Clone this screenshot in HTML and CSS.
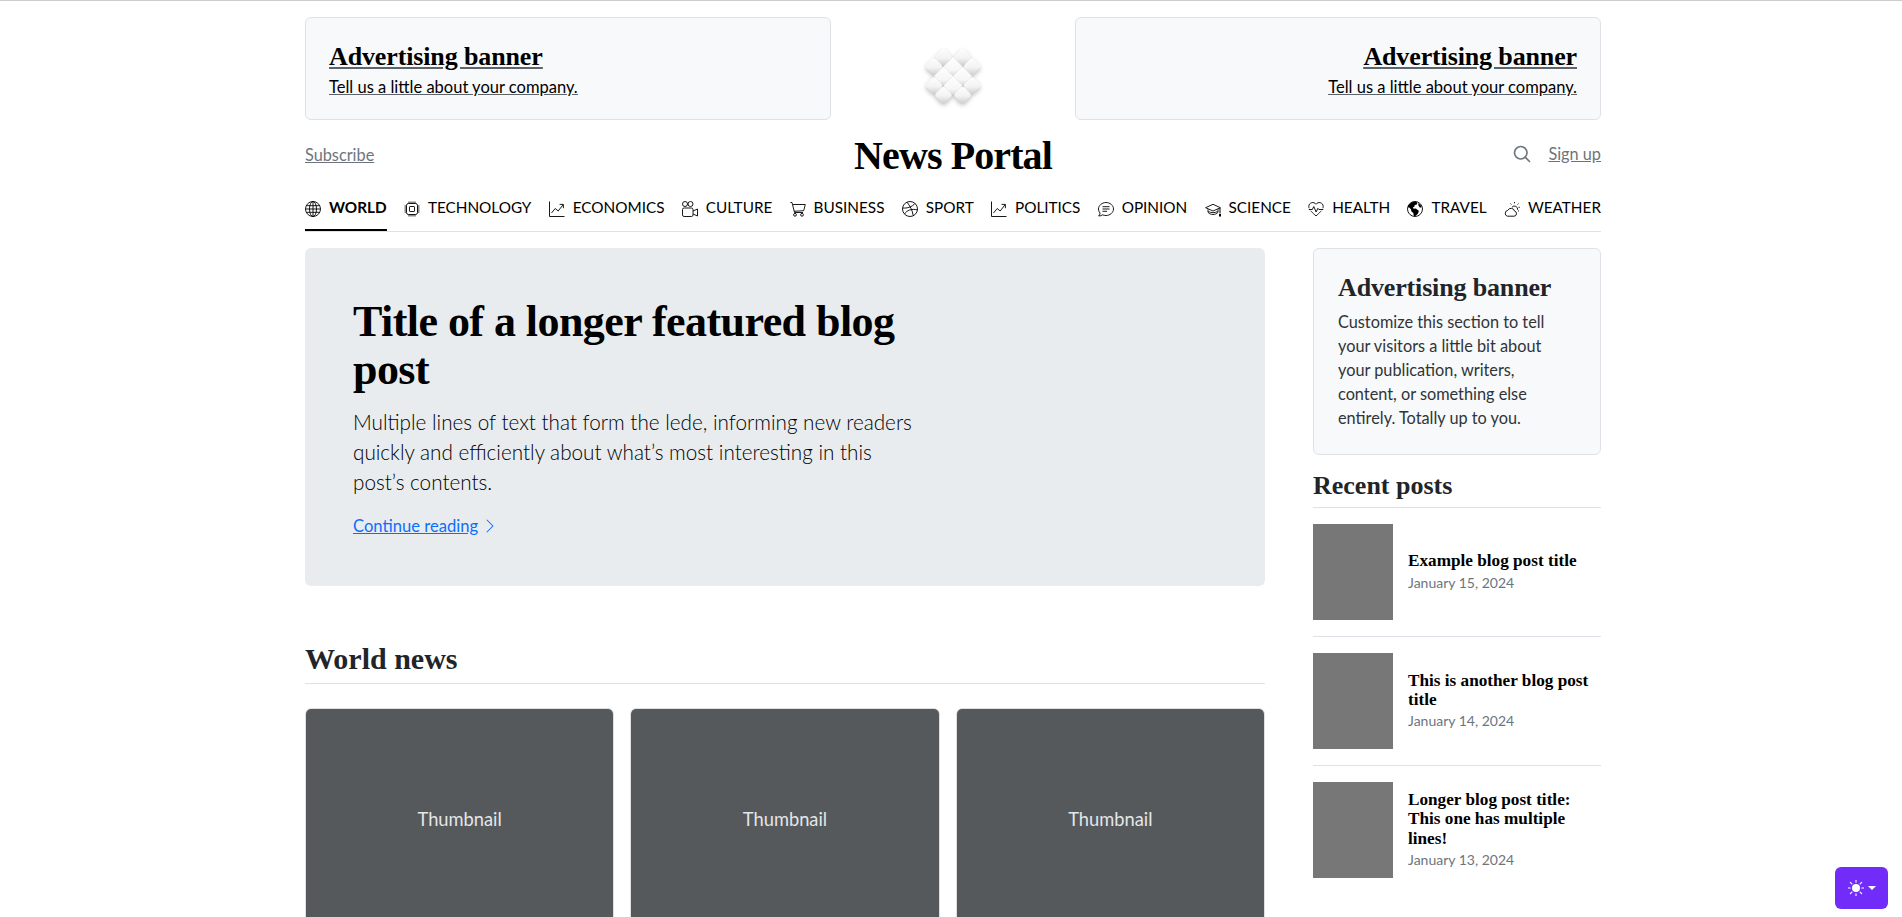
FILE: index.html
```html
<!DOCTYPE html>
<html lang="en">
<head>
<meta charset="utf-8">
<title>News Portal</title>
<link rel="stylesheet" href="styles.css">
</head>
<body>
<div class="page">
  <div class="banners">
    <a class="promo" href="#"><strong class="promo-title">Advertising banner</strong><span class="promo-sub">Tell us a little about your company.</span></a>
    <div class="logo-cell">
      <svg class="logo" viewBox="0 0 64 64" width="76" height="76" aria-hidden="true">
        <defs>
          <linearGradient id="cell" x1="0" y1="0" x2="1" y2="1"><stop offset="0" stop-color="#fff"/><stop offset="0.55" stop-color="#f3f3f3"/><stop offset="1" stop-color="#cacaca"/></linearGradient>
          <linearGradient id="inner" x1="0" y1="0" x2="1" y2="1"><stop offset="0" stop-color="#fff"/><stop offset="0.7" stop-color="#f6f6f6"/><stop offset="1" stop-color="#d8d8d8"/></linearGradient>
        </defs>
        <g transform="rotate(45 32 32)">
          <rect x="20.7" y="9.4" width="11.3" height="11.3" rx="3" fill="url(#cell)"/>
          <rect x="32" y="9.4" width="11.3" height="11.3" rx="3" fill="url(#cell)"/>
          <rect x="9.4" y="20.7" width="11.3" height="11.3" rx="3" fill="url(#cell)"/>
          <rect x="20.7" y="20.7" width="11.3" height="11.3" fill="url(#inner)"/>
          <rect x="32" y="20.7" width="11.3" height="11.3" fill="url(#inner)"/>
          <rect x="43.3" y="20.7" width="11.3" height="11.3" rx="3" fill="url(#cell)"/>
          <rect x="9.4" y="32" width="11.3" height="11.3" rx="3" fill="url(#cell)"/>
          <rect x="20.7" y="32" width="11.3" height="11.3" fill="url(#inner)"/>
          <rect x="32" y="32" width="11.3" height="11.3" fill="url(#inner)"/>
          <rect x="43.3" y="32" width="11.3" height="11.3" rx="3" fill="url(#cell)"/>
          <rect x="20.7" y="43.3" width="11.3" height="11.3" rx="3" fill="url(#cell)"/>
          <rect x="32" y="43.3" width="11.3" height="11.3" rx="3" fill="url(#cell)"/>
        </g>
      </svg>
    </div>
    <a class="promo promo-right" href="#"><strong class="promo-title">Advertising banner</strong><span class="promo-sub">Tell us a little about your company.</span></a>
  </div>

  <header class="masthead">
    <div class="mast-left"><a class="muted-link" href="#">Subscribe</a></div>
    <a class="brand" href="#">News Portal</a>
    <div class="mast-right">
      <svg class="search" viewBox="0 0 24 24" width="20" height="20" fill="none" stroke="currentColor" stroke-width="2" stroke-linecap="round" stroke-linejoin="round" aria-hidden="true"><circle cx="10.5" cy="10.5" r="7.5"/><path d="M21 21l-5.2-5.2"/></svg>
      <a class="muted-link signup" href="#">Sign up</a>
    </div>
  </header>

  <nav class="nav">
    <a class="nav-item active" href="#"><svg class="ico" viewBox="0 0 16 16"><circle cx="8" cy="8" r="7.5"/><ellipse cx="8" cy="8" rx="3.5" ry="7.5"/><path d="M8 .5v15M.5 8h15M1.6 4.7h12.8M1.6 11.3h12.8"/></svg>WORLD</a>
    <a class="nav-item" href="#"><svg class="ico" viewBox="0 0 16 16"><rect x="2.5" y="2.5" width="11" height="11" rx="2"/><rect x="5.5" y="5.5" width="5" height="5" rx=".6"/><path d="M5 .5v2M7 .5v2M9 .5v2M11 .5v2M5 13.5v2M7 13.5v2M9 13.5v2M11 13.5v2M.5 5h2M.5 7h2M.5 9h2M.5 11h2M13.5 5h2M13.5 7h2M13.5 9h2M13.5 11h2"/></svg>TECHNOLOGY</a>
    <a class="nav-item" href="#"><svg class="ico" viewBox="0 0 16 16"><path d="M.5.5v15h15M2.5 12l3.7-4.5 3 2.5 4.8-6.2M10.6 3.4h3.8v3.8"/></svg>ECONOMICS</a>
    <a class="nav-item" href="#"><svg class="ico" viewBox="0 0 16 16"><circle cx="3" cy="3" r="2.5"/><circle cx="8.5" cy="3" r="2.5"/><rect x=".5" y="7" width="10.5" height="8.5" rx="1.6"/><path d="M11 10l4.5-2v7L11 13"/></svg>CULTURE</a>
    <a class="nav-item" href="#"><svg class="ico" viewBox="0 0 16 16"><path d="M.5 1.5H2l.5 2 2 8H13M2.6 3.5h12.7l-1.6 6.2-9.6.6"/><circle cx="5" cy="13.8" r="1.4"/><circle cx="12" cy="13.8" r="1.4"/></svg>BUSINESS</a>
    <a class="nav-item" href="#"><svg class="ico" viewBox="0 0 16 16"><circle cx="8" cy="8" r="7.5"/><path d="M5 1.2c3 3.6 5.6 8.4 6.2 13.4M.7 7c4.5.4 9.4-1 12.4-4.6M2.5 13c2.4-3.9 7-5.4 12.9-4.2"/></svg>SPORT</a>
    <a class="nav-item" href="#"><svg class="ico" viewBox="0 0 16 16"><path d="M.5.5v15h15M2.5 12l3.7-4.5 3 2.5 4.8-6.2M10.6 3.4h3.8v3.8"/></svg>POLITICS</a>
    <a class="nav-item" href="#"><svg class="ico" viewBox="0 0 16 16"><path d="M8 14.5c3.9 0 7.5-2.9 7.5-6.5S11.9 1.5 8 1.5.5 4.4.5 8c0 1.5.6 2.9 1.6 4-.2 1.1-.7 2.3-1.4 3 1.4 0 2.8-.5 3.8-1.2 1.1.5 2.3.7 3.5.7z"/><path d="M4.5 5.7h7M4.5 8h7M4.5 10.3h4.5"/></svg>OPINION</a>
    <a class="nav-item" href="#"><svg class="ico" viewBox="0 0 16 16"><path d="M8 3.3L15.4 6.7 8 10 .6 6.7zM3 8.2v3.1c1.4 1.600 3.200 2.200 5 2.200s3.600-.6 5-2.200V8.200M3.400 10.500c2.800 1.600 6.400 1.600 9.200 0"/><path class="solid" d="M14.500 7v5.400h1V7zM14 13h2v2.500h-2z"/></svg>SCIENCE</a>
    <a class="nav-item" href="#"><svg class="ico" viewBox="0 0 16 16"><path d="M8 3.300C6 .3 1 1.300.8 5.300.7 9 5 12 8 15c3-3 7.300-6 7.200-9.700C15 1.300 10 .3 8 3.300z"/><path class="halo" d="M0 8.500h4.300l1.500-3 2.300 5.500 1.800-3.700 1 1.200H16"/><path d="M.8 8.500h3.500l1.500-3 2.300 5.500 1.800-3.700 1 1.200h4.400"/></svg>HEALTH</a>
    <a class="nav-item" href="#"><svg class="ico" viewBox="0 0 16 16"><circle cx="8" cy="8" r="7.500"/><path class="solid" d="M4.500 1.400C6 .6 7.500.3 9 .5l1.500 1.500-1 1.800-1.800.3-.3 1.700-1.400.4.500 1.600 2.300-.2 2 1.300 1.100 1.200-1 2.600-2.800 2.600-1.200-.4-.6-3-1.800-1.400-.6-2.200L2.200 6.600.7 6.200C1.300 4.200 2.700 2.500 4.500 1.400zM11 2.200l2.200 1.300 1.500 2.500-1.700.8-1.300-1.700z"/></svg>TRAVEL</a>
    <a class="nav-item" href="#"><svg class="ico" viewBox="0 0 16 16"><path d="M3.300 15.200h6.800a2.600 2.600 0 0 0 .5-5.100 3.700 3.700 0 0 0-6.900-.7 3 3 0 0 0-.4 5.800z"/><path d="M8 6.200a3.200 3.200 0 0 1 5.600 2.600M10.500 1v1.300M6.500 2.500l.8 1M14.500 2.500l-.9 1M15.800 6.300h-1.300M15 10.300l-1-.7"/></svg>WEATHER</a>
  </nav>

  <main class="layout">
    <div class="primary">
      <section class="hero">
        <h1 class="hero-title">Title of a longer featured blog post</h1>
        <p class="hero-lede">Multiple lines of text that form the lede, informing new readers quickly and efficiently about what’s most interesting in this post’s contents.</p>
        <p class="hero-more"><a href="#">Continue reading</a><svg class="chev" viewBox="0 0 16 16" width="16" height="16" aria-hidden="true"><path d="M4.646 1.646a.5.5 0 0 1 .708 0l6 6a.5.5 0 0 1 0 .708l-6 6a.5.5 0 0 1-.708-.708L10.293 8 4.646 2.354a.5.5 0 0 1 0-.708z"/></svg></p>
      </section>
      <h3 class="section-title world-title">World news</h3>
      <div class="cards">
        <article class="card"><div class="thumb">Thumbnail</div></article>
        <article class="card"><div class="thumb">Thumbnail</div></article>
        <article class="card"><div class="thumb">Thumbnail</div></article>
      </div>
    </div>
    <aside class="side">
      <div class="side-box">
        <h4 class="side-box-title">Advertising banner</h4>
        <p class="side-box-text">Customize this section to tell your visitors a little bit about your publication, writers, content, or something else entirely. Totally up to you.</p>
      </div>
      <h4 class="section-title recent-title">Recent posts</h4>
      <ul class="posts">
        <li class="post"><div class="post-img"></div><div><h6 class="post-title">Example blog post title</h6><small class="post-date">January 15, 2024</small></div></li>
        <li class="post"><div class="post-img"></div><div><h6 class="post-title">This is another blog post title</h6><small class="post-date">January 14, 2024</small></div></li>
        <li class="post"><div class="post-img"></div><div><h6 class="post-title">Longer blog post title: This one has multiple lines!</h6><small class="post-date">January 13, 2024</small></div></li>
      </ul>
    </aside>
  </main>
</div>
<button class="theme-btn" type="button" aria-label="Toggle theme">
  <svg viewBox="0 0 16 16" width="16" height="16" aria-hidden="true"><circle cx="8" cy="8" r="4" fill="#fff"/><path d="M8 0v2.200M8 13.800V16M0 8h2.200M13.800 8H16M2.300 2.300l1.600 1.600M12.100 12.100l1.600 1.600M2.300 13.700l1.600-1.600M12.100 3.900l1.600-1.600" stroke="#fff" stroke-width="1.100" fill="none" stroke-linecap="round"/></svg>
  <span class="caret"></span>
</button>
</body>
</html>
```
FILE: styles.css
```css
* { box-sizing: border-box; }
html, body { height: 917px; overflow: hidden; }
body {
  margin: 0;
  border-top: 1px solid #ccc;
  background: #fff;
  color: #212529;
  font-family: "Lato", "Noto Sans", sans-serif;
  font-size: 16.3px;
  line-height: 24px;
}
h1, h3, h4, h6, p, ul { margin: 0; padding: 0; }
.page { width: 1296px; margin-left: 305px; }

/* top banners */
.banners { display: grid; grid-template-columns: 526px 196px 526px; column-gap: 24px; padding-top: 16px; }
.promo {
  display: flex; flex-direction: column; align-items: flex-start;
  height: 103px; padding: 22px 23px 0;
  background: #f8f9fa; border: 1px solid #dee2e6; border-radius: 6px;
  color: #000; text-decoration: underline; text-decoration-color: #5c636a;
}
.promo-right { align-items: flex-end; }
.promo-title {
  font-family: "Liberation Serif", serif; font-weight: 700; font-size: 26px; line-height: 34px; letter-spacing: -.13px;
  text-decoration: underline; text-decoration-color: #5c636a;
}
.promo-sub { font-size: 16.5px; line-height: 24px; margin-top: 1px; text-decoration: underline; text-decoration-color: #5c636a; }
.logo-cell { display: flex; justify-content: center; align-items: flex-start; padding-top: 21px; }
.logo { filter: drop-shadow(0 2px 2px rgba(0,0,0,.25)) blur(.4px); }

/* masthead */
.masthead { display: grid; grid-template-columns: 1fr auto 1fr; align-items: center; height: 70px; }
.muted-link { color: #6c757d; text-decoration: underline; }
.brand { color: #000; text-decoration: none; font-family: "Liberation Serif", serif; font-weight: 700; font-size: 40px; line-height: 48px; letter-spacing: -.9px; margin-top: 1px; }
.mast-right { display: flex; justify-content: flex-end; align-items: center; color: #6c757d; margin-top: -3px; }
.signup { margin-left: 16px; }

/* nav */
.nav { display: flex; justify-content: space-between; height: 42px; border-bottom: 1px solid #dee2e6; font-size: 15.3px; }
.nav-item {
  display: flex; align-items: flex-start; column-gap: 8px;
  height: 41px; padding-top: 5px; color: #000; text-decoration: none;
}
.nav-item.active { font-weight: 700; border-bottom: 2px solid #000; }
.ico { width: 16px; height: 16px; margin-top: 6px; flex: none; fill: none; stroke: #000; stroke-width: .9; }
.ico .solid { fill: #000; stroke: none; }
.ico .halo { stroke: #fff; stroke-width: 2.5; }

/* layout */
.layout { display: grid; grid-template-columns: 960px 288px; column-gap: 48px; padding-top: 16px; }

.hero { height: 338px; padding: 50px 48px 0; background: #e9ecef; border-radius: 6px; color: #000; }
.hero-title {
  width: 600px; font-family: "Liberation Serif", serif; font-weight: 700; font-size: 44px; line-height: 48px; letter-spacing: -.55px;
}
.hero-lede { width: 570px; margin-top: 13px; font-size: 20.7px; line-height: 30px; font-weight: 300; }
.hero-more { display: flex; align-items: center; column-gap: 4px; margin-top: 17px; font-size: 16.6px; }
.hero-more a { color: #0d6efd; text-decoration: underline; }
.chev { fill: #0d6efd; }

.section-title { font-family: "Liberation Serif", serif; font-weight: 700; color: #212529; border-bottom: 1px solid #dee2e6; }
.world-title { margin-top: 49px; font-size: 30px; line-height: 48px; }
.cards { display: grid; grid-template-columns: repeat(3, 1fr); column-gap: 16px; margin-top: 24px; }
.card { border: 1px solid rgba(0,0,0,.125); border-radius: 6px; overflow: hidden; }
.thumb { display: flex; align-items: center; justify-content: center; height: 225px; padding-bottom: 5px; background: #55595c; color: #e4e6e7; font-size: 18.3px; }

/* sidebar */
.side-box { height: 207px; padding: 23px 24px 0; background: #f8f9fa; border: 1px solid #dee2e6; border-radius: 6px; }
.side-box-title { font-family: "Liberation Serif", serif; font-weight: 700; font-size: 26px; line-height: 32px; letter-spacing: -.15px; margin-bottom: 6px; }
.side-box-text { max-width: 216px; color: #2f3439; }
.recent-title { margin-top: 13px; padding-bottom: 3px; font-size: 26px; line-height: 36px; }
.posts { list-style: none; }
.post { display: flex; align-items: center; column-gap: 15px; padding: 16px 0; border-bottom: 1px solid #dee2e6; }
.post:last-child { border-bottom: 0; }
.post-img { width: 80px; height: 96px; flex: none; background: #777; }
.post-title { font-family: "Liberation Serif", serif; font-weight: 700; font-size: 17.2px; line-height: 19.2px; color: #000; }
.post-date { display: block; margin-top: 1px; font-size: 14px; line-height: 21px; color: #6c757d; }

/* theme toggle */
.theme-btn {
  position: fixed; right: 14px; bottom: 8px; width: 53px; height: 42px;
  display: flex; align-items: center; justify-content: center; column-gap: 4px;
  padding: 0; background: #712cf9; border: 0; border-radius: 6px;
}
.caret { width: 0; height: 0; border-left: 4px solid transparent; border-right: 4px solid transparent; border-top: 4px solid #fff; }
```
